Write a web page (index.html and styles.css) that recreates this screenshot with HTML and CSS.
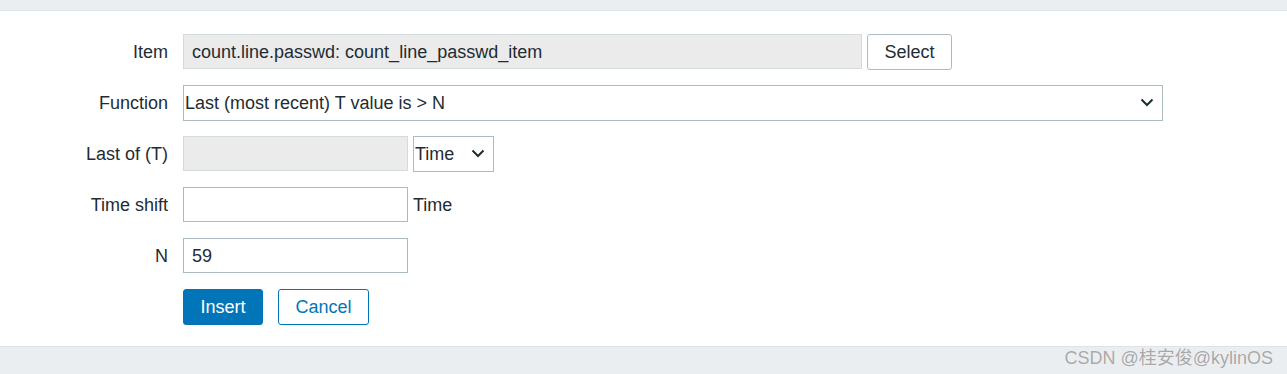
FILE: index.html
```html
<!DOCTYPE html>
<html lang="en">
<head>
    <meta charset="UTF-8">
    <title>Trigger function</title>
    <link rel="stylesheet" href="styles.css">
</head>
<body>
    <div class="top"></div>
    <div class="panel">
        <div class="form">
            <label class="lbl">Item</label>
            <div class="field">
                <div class="input readonly wide">count.line.passwd: count_line_passwd_item</div>
                <button class="btn btn-alt">Select</button>
            </div>

            <label class="lbl">Function</label>
            <div class="field">
                <div class="select full">
                    <span>Last (most recent) T value is &gt; N</span>
                    <svg width="14" height="9" viewBox="0 0 14 9"><path d="M1.5 1.5 L7 7 L12.5 1.5" fill="none" stroke="#1f2c33" stroke-width="2"/></svg>
                </div>
            </div>

            <label class="lbl">Last of (T)</label>
            <div class="field">
                <div class="input readonly short"></div>
                <div class="select small">
                    <span>Time</span>
                    <svg width="14" height="9" viewBox="0 0 14 9"><path d="M1.5 1.5 L7 7 L12.5 1.5" fill="none" stroke="#1f2c33" stroke-width="2"/></svg>
                </div>
            </div>

            <label class="lbl">Time shift</label>
            <div class="field">
                <div class="input short"></div>
                <span class="unit">Time</span>
            </div>

            <label class="lbl">N</label>
            <div class="field">
                <div class="input short">59</div>
            </div>

            <span></span>
            <div class="field buttons">
                <button class="btn btn-main">Insert</button>
                <button class="btn btn-cancel">Cancel</button>
            </div>
        </div>
    </div>
    <div class="mark">CSDN @桂安俊@kylinOS</div>
</body>
</html>
```

FILE: styles.css
```css
body {
    margin: 0;
    background: #ebeef0;
    font-family: "Liberation Sans", Arial, "Noto Sans CJK SC", sans-serif;
    font-size: 18px;
    color: #1f2c33;
    height: 374px;
    overflow: hidden;
    position: relative;
}
.top {
    height: 10px;
}
.panel {
    background: #fff;
    border-top: 1px solid #dde3e6;
    border-bottom: 1px solid #dde3e6;
    padding: 23px 0 22px;
}
.form {
    display: grid;
    grid-template-columns: 168px 1fr;
    column-gap: 15px;
    row-gap: 16px;
    align-items: center;
}
.lbl {
    text-align: right;
    padding-top: 2px;
}
.field {
    display: flex;
    align-items: center;
    gap: 5px;
    height: 35px;
}
.input {
    box-sizing: border-box;
    height: 35px;
    border: 1px solid #acbbc2;
    background: #fff;
    padding: 2px 8px 0;
    display: flex;
    align-items: center;
    white-space: nowrap;
}
.readonly {
    background: #ebebeb;
    border-color: #d4dbdf;
}
.wide {
    width: 679px;
}
.short {
    width: 225px;
}
.select {
    box-sizing: border-box;
    height: 36px;
    border: 1px solid #acbbc2;
    padding: 2px 8px 0 1px;
    display: flex;
    align-items: center;
    justify-content: space-between;
}
.select svg {
    margin-top: -2px;
}
.full {
    width: 980px;
}
.small {
    width: 81px;
}
.unit {
    padding-top: 2px;
}
.btn {
    box-sizing: border-box;
    height: 36px;
    font-family: inherit;
    font-size: 18px;
    border-radius: 3px;
    padding: 2px 0 0;
    cursor: pointer;
}
.btn-alt {
    width: 85px;
    background: #fff;
    border: 1px solid #acbbc2;
    color: #1f2c33;
}
.btn-main {
    width: 80px;
    background: #0275b8;
    border: 1px solid #0275b8;
    color: #fff;
}
.btn-cancel {
    width: 91px;
    background: #fff;
    border: 1px solid #0275b8;
    color: #0275b8;
}
.buttons {
    gap: 15px;
}
.mark {
    position: absolute;
    right: 14px;
    top: 343px;
    font-size: 18px;
    color: #a8a8a8;
    text-shadow: 0 0 1px #fff;
}
```
